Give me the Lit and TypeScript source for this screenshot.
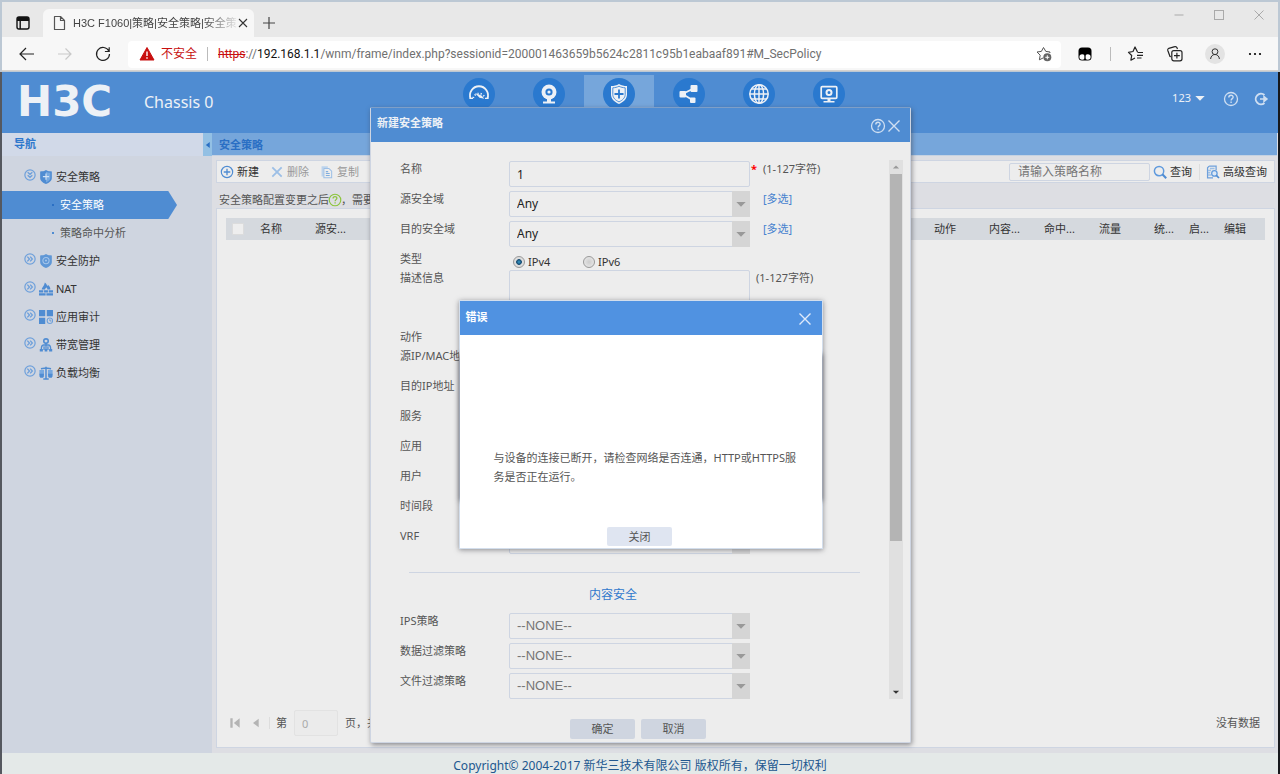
import { LitElement, html, css, svg } from "lit";
import { customElement, property, state } from "lit/decorators.js";
import { classMap } from "lit/directives/class-map.js";

const glyphs = {
  workspace: svg`<rect x="3" y="3" width="12" height="12" rx="2" fill="none" stroke="#111" stroke-width="1.4"/><path d="M3 6V5a2 2 0 0 1 2-2h8a2 2 0 0 1 2 2v2H3z" fill="#111"/><path d="M6.2 6v9" stroke="#111" stroke-width="1.4"/>`,
  page: svg`<path d="M4.5 2.5h6l4 4v9h-10zM10.5 2.5v4h4" fill="none" stroke="#555" stroke-width="1.2" stroke-linejoin="round"/>`,
  close: svg`<path d="M3 3l12 12M15 3L3 15" stroke="#333" stroke-width="1.600" fill="none"/>`,
  plus: svg`<path d="M3 9h12M9 3v12" stroke="#444" stroke-width="1.2" fill="none"/>`,
  min: svg`<path d="M4.500 9h9" stroke="#aaa" fill="none"/>`,
  max: svg`<rect x="4.500" y="4.500" width="9" height="9" stroke="#aaa" fill="none"/>`,
  exit: svg`<path d="M4.500 4.500l9 9M13.500 4.500l-9 9" stroke="#aaa" fill="none"/>`,
  back: svg`<path d="M2 9h14M8 3L2 9l6 6" stroke="#222" stroke-width="1.2" fill="none"/>`,
  forward: svg`<path d="M2 9h13M9.500 3.500L15 9l-5.500 5.500" stroke="#c9c9c9" stroke-width="1.2" fill="none"/>`,
  reload: svg`<path d="M14.800 6A6.500 6.500 0 1 0 15.500 9M15.200 2.200v4.300h-4.300" stroke="#222" stroke-width="1.2" fill="none"/>`,
  warn: svg`<path d="M9 2.500L16 15H2z" fill="#c80f0f" stroke="#c80f0f" stroke-linejoin="round"/><path d="M9 6.500v4.500M9 12.300v1.400" stroke="#fff" stroke-width="1.4"/>`,
  addStar: svg`<path d="M14.800 8L15 7l-4.200-.6L8.500 2.500 6.400 6.400 2 7l3.200 3.200-.8 4.600L8 13" fill="none" stroke="#555" stroke-linejoin="round"/><circle cx="12.300" cy="12.300" r="4" fill="#666"/><path d="M10.300 12.300h4M12.300 10.300v4" stroke="#fff"/>`,
  ext: svg`<rect x="2.500" y="2.500" width="13" height="13" rx="3.500" fill="#000"/><circle cx="6.200" cy="12" r="2.800" fill="#fff"/><circle cx="11.800" cy="12" r="2.800" fill="#fff"/><path d="M9 9.500v5" stroke="#000" stroke-width="1.2"/>`,
  favs: svg`<path d="M10.500 7L8 2 6 6.500l-4.500.8 3.200 3.200-.8 4.700L8 13" fill="none" stroke="#222" stroke-width="1.2" stroke-linejoin="round"/><path d="M10.500 7.500h5.500M10 10.300h6M10 13h4.500" stroke="#222" stroke-width="1.2"/>`,
  coll: svg`<path d="M5 11.800l-1-.3L1.800 5.500a1.800 1.800 0 0 1 1-2.200l6-1.600a1.800 1.800 0 0 1 2.200 1l.4 1.400" fill="none" stroke="#222" stroke-width="1.2"/><rect x="5.800" y="5.600" width="10.200" height="10.200" rx="2" fill="none" stroke="#222" stroke-width="1.200"/><path d="M8 10.700h5.800M10.900 7.800v5.800" stroke="#222" stroke-width="1.200"/>`,
  user: svg`<circle cx="10" cy="10" r="10" fill="#e3e3e3"/><circle cx="10" cy="7.700" r="2.900" fill="none" stroke="#333"/><path d="M5.600 15c.4-6 8.400-6 8.800 0" fill="none" stroke="#333"/>`,
  dots: svg`<circle cx="4" cy="9" r="1.100"/><circle cx="9" cy="9" r="1.100"/><circle cx="14" cy="9" r="1.100"/>`,
  gauge: svg`<path d="M7.600 20.500a9 9 0 1 1 16.800 0" fill="none" stroke="#edf1f6" stroke-width="1.800"/><path d="M10.200 20a6 6 0 0 1 11.600 0" fill="none" stroke="#edf1f6" stroke-width="1.800" stroke-dasharray="1.200 1.900"/><path d="M12 15l6.500 2.500 2.800 3.300-4.800-1z" fill="#edf1f6"/><path d="M6.500 20.300h3.500M22 20.300h3.500" stroke="#edf1f6" stroke-width="1.300"/>`,
  cam: svg`<circle cx="16" cy="14" r="7.500" fill="#edf1f6"/><circle cx="16" cy="14" r="3.600" fill="#2a79cf"/><circle cx="16" cy="14" r="1.600" fill="#edf1f6"/><path d="M14 21h4v2.500h4v2H10v-2h4z" fill="#edf1f6"/>`,
  shield: svg`<path d="M16 6c2.500 1.600 5 2 8 2v8.500c0 4.500-3.500 7.500-8 9.500-4.500-2-8-5-8-9.500V8c3 0 5.500-.4 8-2z" fill="#edf1f6"/><path d="M16 8.200c2 1.100 4 1.500 6.200 1.600v6.600c0 3.400-2.600 5.800-6.200 7.500-3.600-1.700-6.200-4.100-6.200-7.500V9.800c2.200-.1 4.200-.5 6.200-1.600z" fill="none" stroke="#2a79cf" stroke-width=".8"/><path d="M16 11.500v9M11.500 16h9" stroke="#2a79cf" stroke-width="1.800"/>`,
  nodes: svg`<path d="M9.500 16l11-5.500M9.500 16l10 6" stroke="#edf1f6" stroke-width="1.800"/><rect x="6.500" y="13" width="6.500" height="6.500" rx="1" fill="#edf1f6"/><rect x="17.500" y="7" width="7" height="7" rx="1" fill="#edf1f6"/><rect x="17" y="19.500" width="5.500" height="5.500" rx="1" fill="#edf1f6"/>`,
  globe: svg`<g fill="none" stroke="#edf1f6" stroke-width="1.500"><circle cx="16" cy="16" r="9.200"/><ellipse cx="16" cy="16" rx="4.600" ry="9.200"/><path d="M16 6.800v18.400M6.800 16h18.400M8.500 11h15M8.500 21h15"/></g>`,
  screen: svg`<rect x="8.200" y="8.700" width="15.600" height="11.600" rx="1" fill="none" stroke="#edf1f6" stroke-width="1.700"/><circle cx="16" cy="14.400" r="2.500" fill="none" stroke="#edf1f6" stroke-width="2"/><path d="M14.500 21h3v2h4v1.600h-11V23h4z" fill="#edf1f6"/>`,
  help: svg`<circle cx="9" cy="9" r="6.500" fill="none" stroke="currentColor" stroke-width="1.300"/><path d="M6.800 7.400c0-3 4.500-2.800 4.300-.2-.1 1.400-2 1.500-2 3.300M9.100 11.500v1.500" fill="none" stroke="currentColor" stroke-width="1.400"/>`,
  logout: svg`<path d="M12.500 5A5.300 5.300 0 1 0 12.500 13" fill="none" stroke="currentColor" stroke-width="1.900"/><path d="M8 9h6M12 6.500L15 9l-3 2.500z" stroke="currentColor" stroke-width="1.500" fill="currentColor"/>`,
  cross: svg`<path d="M3.500 3.500l11 11M14.500 3.500l-11 11" stroke="currentColor" stroke-width="1.400" fill="none"/>`,
  open: svg`<circle cx="9" cy="9" r="7.700" fill="none" stroke="#6ea0db" stroke-width="1.800"/><path d="M5.500 5L9 8l3.500-3M5.500 9.200L9 12.400l3.500-3.200" fill="none" stroke="#6ea0db" stroke-width="2"/>`,
  shut: svg`<circle cx="9" cy="9" r="7.700" fill="none" stroke="#6ea0db" stroke-width="1.800"/><path d="M5 5.500L8.200 9 5 12.500M9.300 5.500L12.500 9l-3.200 3.500" fill="none" stroke="#6ea0db" stroke-width="2"/>`,
  sPlus: svg`<path d="M9 0c2.200 1.500 4.800 1.800 7.500 1.800v8.400c0 3.800-3.200 5.900-7.500 7.800-4.300-1.900-7.500-4-7.500-7.800V1.800C4.200 1.800 6.800 1.500 9 0z" fill="#4f8cd2"/><path d="M9 2.200c1.600.9 3.500 1.300 5.500 1.400v6.600c0 2.600-2.200 4.100-5.500 5.800z" fill="#77a9e0"/><path d="M9 4.500v8M5 8.500h8" stroke="#d3e3f5" stroke-width="1.500"/>`,
  sGear: svg`<path d="M9 0c2.200 1.500 4.800 1.800 7.500 1.800v8.400c0 3.800-3.200 5.900-7.500 7.800-4.300-1.900-7.500-4-7.500-7.800V1.800C4.200 1.800 6.800 1.500 9 0z" fill="#5f97d6"/><circle cx="9" cy="8.500" r="4" fill="none" stroke="#a5c5ea" stroke-width="1.400"/><circle cx="9" cy="8.500" r="1.300" fill="#a5c5ea"/>`,
  wall: svg`<path d="M0 10.500h5.500v3H0zM6.500 10.500h5v3h-5zM12.500 10.500H18v3h-5.500zM0 14.500h8.500v3H0zM9.500 14.500H18v3H9.500z" fill="#4f8cd2"/><path d="M3.500 9.800c0-3 3-4.300 4-9.300C10 2 10 4.500 11 5c.4-.5.500-1 .4-1.600C14 5.500 15 8 14.500 9.800h-3.800c.3-1.500-.7-2-1.200-3-.3 1.300-1.800 1.500-1.700 3z" fill="#4f8cd2"/>`,
  grid: svg`<path d="M0 0h8v8H0zM10 0h8v8h-8zM0 10h8v8H0z" fill="#4f8cd2"/><circle cx="14" cy="13.800" r="3.500" fill="#cfd5e0" stroke="#6ea0db" stroke-width="1.400"/><path d="M14 11.800v2.300h2" stroke="#4f8cd2" fill="none"/>`,
  band: svg`<circle cx="9" cy="4" r="2.900" fill="none" stroke="#4f8cd2" stroke-width="2"/><path d="M9 6.700V14M9 9H6c-2.500 0-3 2-3 5.500M9 9h3c2.500 0 3 2 3 5.500M6.500 10.500v5M11.500 10.500v5" fill="none" stroke="#4f8cd2" stroke-width="1.700"/><path d="M1 14h4v3.500H1zM7.300 14h3.400v3.500H7.300zM13 14h4v3.500h-4z" fill="#4f8cd2"/>`,
  scale: svg`<path d="M9 1v15M5.500 16.700h7M2.500 3.500l6.500-1 6.500 1" stroke="#4f8cd2" stroke-width="1.900" fill="none"/><path d="M.5 5h6v9h-6zM11.500 5h6v9h-6z" fill="#77a9e0"/><path d="M.5 10h6l-1 5h-4zM11.500 10h6l-1 5h-4z" fill="#4f8cd2"/>`,
  add: svg`<circle cx="9" cy="9" r="7.300" fill="none" stroke="#4f8cd2" stroke-width="1.500"/><path d="M4.800 9h8.400M9 4.800v8.400" stroke="#4f8cd2" stroke-width="1.700"/>`,
  del: svg`<path d="M3 3l12 12M15 3L3 15" stroke="#9cbfe6" stroke-width="2.300"/>`,
  copy: svg`<path d="M2 1.500h8v2.300H4.500v11H2z" fill="#bcd3ec"/><path d="M5 4.500h6.500L15 8v8.500H5z" fill="none" stroke="#9cbfe6" stroke-width="1.300"/><path d="M7.500 8.500h3M7.500 11h5M7.500 13.500h5" stroke="#7fadde" stroke-width="1.400"/>`,
  search: svg`<circle cx="7.800" cy="7.800" r="6" fill="none" stroke="#5f9add" stroke-width="1.900"/><path d="M12 12l5 5" stroke="#4f8cd2" stroke-width="2.600"/>`,
  adv: svg`<path d="M4 1.500h9v5M4 1.500L2 3.500v13h7" fill="none" stroke="#6ea0db" stroke-width="1.600"/><path d="M5 4.500h6M2.500 7h4M2.500 10h3M2.500 13h4" stroke="#9cbfe6" stroke-width="1.900"/><circle cx="10.800" cy="10.800" r="3.500" fill="#dce8f6" stroke="#5f9add" stroke-width="1.600"/><path d="M13.300 13.300l3.400 3.400" stroke="#4f8cd2" stroke-width="2.200"/>`,
  first: svg`<path d="M3 3h3v12H3zM15 3v12L7.500 9z" fill="#b4b4b4"/>`,
  prev: svg`<path d="M13 2.500v13L4.500 9z" fill="#b4b4b4"/>`,
  down: svg`<path d="M2 6h14L9 13z" fill="currentColor"/>`,
  up: svg`<path d="M2 12.500h14L9 5.500z" fill="currentColor"/>`,
  left: svg`<path d="M13 2v14L4 9z" fill="currentColor"/>`,
};

type Glyph = keyof typeof glyphs;
const icon = (name: Glyph, size = "m", box = 18) =>
  html`<svg class="ico ${size}" viewBox="0 0 ${box} ${box}" aria-hidden="true">${glyphs[name]}</svg>`;

const base = css`
  :host, * { box-sizing: border-box; }
  :host {
    font-family: "Noto Sans", "Noto Sans CJK SC", sans-serif;
    font-size: 11px;
    line-height: 16px;
    color: #555;
  }
  button, input, select, textarea { font: inherit; color: inherit; margin: 0; outline: none; }
  button { background: none; border: 0; padding: 0; display: flex; align-items: center; justify-content: center; }
  a { color: inherit; text-decoration: none; }
  .ico { display: block; flex: none; width: 14px; height: 14px; }
  .xs { width: 8px; height: 8px; }
  .s { width: 12px; height: 12px; }
  .n { width: 16px; height: 16px; }
  .l { width: 18px; height: 18px; }
  .av { width: 20px; height: 20px; }
  .xl { width: 32px; height: 32px; }
`;

@customElement("browser-chrome")
class BrowserChrome extends LitElement {
  static styles = [base, css`
    :host { display: block; }
    .tabs { display: flex; height: 35px; padding-left: 12px; background: #e8e8e8; align-items: flex-end; }
    .tabs > button { height: 28px; width: 18px; }
    .tab { display: flex; align-items: center; width: 211px; height: 28px; margin: 0 6px 0 11px; padding: 0 7px; background: #f7f7f7; border-radius: 6px 6px 0 0; }
    .title { flex: 1; margin-left: 5px; font-family: "Liberation Sans", "Noto Sans CJK SC", sans-serif; white-space: nowrap; color: #444; -webkit-mask-image: linear-gradient(90deg, #000 80%, rgba(0, 0, 0, .1)); }
    .win { margin-left: auto; display: flex; gap: 22px; align-self: flex-start; padding: 4px 10px 0 0; }
    .bar { display: flex; align-items: center; height: 34px; padding: 1px 14px 0 16px; background: #f7f7f7; border-bottom: 1px solid #d6d2ce; }
    .nav { display: flex; gap: 20px; width: 110px; }
    .url { flex: 1; display: flex; align-items: center; height: 27px; padding: 0 8px 0 10px; background: #fff; border-radius: 4px; font: 12px/18px Roboto, "Noto Sans CJK SC", sans-serif; color: #707070; overflow: hidden; white-space: nowrap; }
    .unsafe { color: #c80f0f; margin: 0 10px 0 5px; }
    .sep { width: 1px; height: 14px; background: #bbb; }
    .path { flex: 1; margin-left: 10px; }
    .path s { color: #c80f0f; }
    .path b { font-weight: 400; color: #111; }
    .tools { display: flex; align-items: center; gap: 21px; margin-left: 15px; }
    .tools .sep { margin: 0 -5px; }
  `];
  render() {
    return html`
      <div class="tabs">
        <button aria-label="工作区">${icon("workspace", "l")}</button>
        <div class="tab">${icon("page", "l")}<span class="title">H3C F1060|策略|安全策略|安全策</span>
          <button aria-label="关闭标签页">${icon("close", "s")}</button></div>
        <button aria-label="新标签页">${icon("plus", "l")}</button>
        <div class="win">
          <button aria-label="最小化">${icon("min", "l")}</button>
          <button aria-label="最大化">${icon("max", "l")}</button>
          <button aria-label="关闭窗口">${icon("exit", "l")}</button>
        </div>
      </div>
      <div class="bar">
        <div class="nav">
          <button aria-label="后退">${icon("back", "l")}</button>
          <button aria-label="前进">${icon("forward", "l")}</button>
          <button aria-label="刷新">${icon("reload", "l")}</button>
        </div>
        <div class="url">${icon("warn", "l")}<span class="unsafe">不安全</span><span class="sep"></span>
          <span class="path"><s>https</s>://<b>192.168.1.1</b>/wnm/frame/index.php?sessionid=200001463659b5624c2811c95b1eabaaf891#M_SecPolicy</span>
          <button aria-label="添加到收藏夹">${icon("addStar", "l")}</button>
        </div>
        <div class="tools">
          <button aria-label="扩展">${icon("ext", "l")}</button><span class="sep"></span>
          <button aria-label="收藏夹">${icon("favs", "l")}</button>
          <button aria-label="集锦">${icon("coll", "l")}</button>
          <button aria-label="个人资料">${icon("user", "av", 20)}</button>
          <button aria-label="更多">${icon("dots", "l")}</button>
        </div>
      </div>`;
  }
}

@customElement("device-header")
class DeviceHeader extends LitElement {
  static styles = [base, css`
    :host { display: flex; height: 62px; background: #4f8cd2; color: #edf1f6; }
    .brand { flex: 0 0 442px; display: flex; align-items: center; gap: 20px; padding-left: 15px; }
    .logo { width: 107px; font: bold 42px/62px "DejaVu Sans", sans-serif; }
    .name { font: 16px/62px "Noto Sans", sans-serif; }
    nav { display: flex; padding-top: 4px; }
    nav a { width: 70px; display: flex; justify-content: center; align-items: flex-start; padding-top: 3px; }
    nav a.on { background: #76a6db; }
    .disc { background: #2a79cf; border-radius: 50%; }
    .user { margin-left: auto; display: flex; align-items: center; padding: 0 8px 8px 0; }
    .user button { gap: 3px; }
    .who { margin-right: 16px; }
    .help { margin-right: 12px; padding-top: 2px; }
    .out { padding-top: 2px; }
    .help, .out { color: #cfdff2; }
  `];
  render() {
    const tabs: [Glyph, string][] = [["gauge", "概览"], ["cam", "监控"], ["shield", "策略"], ["nodes", "对象"], ["globe", "网络"], ["screen", "系统"]];
    return html`
      <div class="brand"><span class="logo">H3C</span><span class="name">Chassis 0</span></div>
      <nav>${tabs.map(([g, t]) => html`<a href="#" aria-label=${t} class=${classMap({ on: g === "shield" })}><span class="disc">${icon(g, "xl", 32)}</span></a>`)}</nav>
      <div class="user">
        <button class="who">123 ${icon("down", "s")}</button>
        <button class="help" aria-label="帮助">${icon("help", "l")}</button>
        <button class="out" aria-label="退出">${icon("logout", "l")}</button>
      </div>`;
  }
}

@customElement("side-nav")
class SideNav extends LitElement {
  static styles = [base, css`
    :host { display: block; background: #cfd5e0; color: #333; }
    .head { display: flex; justify-content: space-between; height: 23px; background: #d1d9e8; color: #2f78cc; font-weight: 700; padding-left: 12px; line-height: 22px; }
    .head button { width: 9px; background: #93c0e4; color: #2a6fc4; }
    ul { list-style: none; margin: 0; padding: 7px 0 0; }
    li { display: flex; align-items: center; height: 28px; padding-left: 22px; }
    li a { display: flex; align-items: center; gap: 3px; }
    li a .ico:first-child { margin-bottom: 4px; }
    .sub { padding-left: 50px; color: #555; }
    .sub a { gap: 6px; }
    .dot { width: 2px; height: 2px; background: #4f8cd2; }
    .on { width: 175px; background: #4f8cd2; color: #fff; clip-path: polygon(0 0, 95% 0, 100% 50%, 95% 100%, 0 100%); }
    .on .dot { background: #2a6fc4; }
  `];
  render() {
    const rest: [Glyph, string][] = [["sGear", "安全防护"], ["wall", "NAT"], ["grid", "应用审计"], ["band", "带宽管理"], ["scale", "负载均衡"]];
    return html`
      <div class="head"><span>导航</span><button aria-label="收起导航">${icon("left", "xs")}</button></div>
      <ul>
        <li><a href="#">${icon("open", "s")}${icon("sPlus")}安全策略</a></li>
        <li class="sub on"><a href="#"><span class="dot"></span>安全策略</a></li>
        <li class="sub"><a href="#"><span class="dot"></span>策略命中分析</a></li>
        ${rest.map(([g, t]) => html`<li><a href="#">${icon("shut", "s")}${icon(g)}${t}</a></li>`)}
      </ul>`;
  }
}

@customElement("policy-list")
class PolicyList extends LitElement {
  static styles = [base, css`
    :host { display: flex; flex-direction: column; background: #dddee3; min-width: 0; }
    .crumb { height: 23px; padding-left: 7px; background: #76a6db; color: #2a6fc4; font-weight: 700; line-height: 24px; border-bottom: 1px solid #c5d2e2; }
    .body { flex: 1; display: flex; flex-direction: column; padding: 4px 2px 5px 4px; }
    .tools { display: flex; align-items: center; height: 23px; background: #ededed; border: 1px solid #ced5e2; padding: 0 7px 0 3px; color: #333; white-space: nowrap; }
    .tools button { gap: 3px; margin-right: 11px; }
    .tools button.off { color: #999; }
    .tools input { margin-left: auto; margin-right: 3px; width: 141px; height: 18px; padding: 0 8px; border: 1px solid #ced5e2; border-radius: 2px; background: #ededed; font-size: 12px; }
    .tools input::placeholder { color: #757575; opacity: 1; }
    .tools .find { margin-right: 7px; }
    .tools .adv { margin-right: 0; padding-left: 6px; border-left: 1px solid #ddd; }
    .note { display: flex; align-items: center; height: 25px; padding: 8px 3px 0; }
    .note .ico { color: #8cc43c; margin: 0 -2px; }
    .panel { flex: 1; display: flex; flex-direction: column; justify-content: space-between; background: #ededed; border: 1px solid #ced5e2; padding: 9px 9px 11px; }
    table { width: 100%; table-layout: fixed; border-collapse: collapse; background: #d5d9de; color: #333; }
    th { height: 22px; padding: 0 0 0 6px; text-align: left; font-weight: 400; white-space: nowrap; }
    th input { display: block; appearance: none; width: 12px; height: 12px; border: 1px solid #dcdcdc; background: #eee; border-radius: 1px; }
    .c1 { width: 28px; } .c2 { width: 55px; } .c3 { width: 35px; } .c4 { width: 47px; }
    .foot { display: flex; align-items: center; }
    .foot button { margin-right: 8px; }
    .foot .bar { width: 1px; height: 12px; background: #ddd; margin: 0 6px 0 -1px; }
    .foot label { display: flex; align-items: center; gap: 7px; }
    .foot input { width: 44px; height: 26px; padding: 0 7px; border: 1px solid #e2e2e2; background: #ebebeb; border-radius: 2px; color: #aaa; }
    .foot .none { margin-left: auto; margin-right: 5px; }
    .foot .first { margin-left: 2px; }
  `];
  render() {
    return html`
      <div class="crumb">安全策略</div>
      <div class="body">
        <div class="tools">
          <button>${icon("add")}新建</button>
          <button class="off">${icon("del")}删除</button>
          <button class="off">${icon("copy")}复制</button>
          <input aria-label="策略名称" placeholder="请输入策略名称" />
          <button class="find">${icon("search")}查询</button>
          <button class="adv">${icon("adv")}高级查询</button>
        </div>
        <div class="note">安全策略配置变更之后${icon("help", "n")}，需要</div>
        <div class="panel">
          <table><thead><tr>
            <th class="c1"><input type="checkbox" aria-label="全选" /></th>
            <th class="c2">名称</th><th class="c2">源安...</th><th></th>
            <th class="c2">动作</th><th class="c2">内容...</th><th class="c2">命中...</th><th class="c2">流量</th>
            <th class="c3">统...</th><th class="c3">启...</th><th class="c4">编辑</th>
          </tr></thead></table>
          <div class="foot">
            <button class="first" aria-label="首页">${icon("first")}</button>
            <button aria-label="上一页">${icon("prev", "s")}</button>
            <span class="bar"></span>
            <label>第<input value="0" />页，共</label>
            <span class="none">没有数据</span>
          </div>
        </div>
      </div>`;
  }
}

@customElement("policy-dialog")
class PolicyDialog extends LitElement {
  @property({ type: String }) policyName = "1";
  @state() private ipType = "IPv4";
  static styles = [base, css`
    :host { display: block; background: #ededed; border: 1px solid #ced5e2; border-top-color: #7e9fc8; border-radius: 2px; box-shadow: 1px 2px 5px rgba(60, 60, 70, .55); }
    header { display: flex; align-items: center; height: 34px; padding: 3px 7px 3px 6px; background: #4f8cd2; color: #edf1f6; }
    h2 { flex: 1; margin: 0 0 4px; font-size: 11px; line-height: 16px; }
    header button { color: #cfdff2; padding-top: 2px; }
    header button:last-child { margin-left: -2px; }
    .scroll { display: flex; margin: 18px 7px 0 29px; }
    form { flex: 1; padding-top: 1px; }
    .row { display: grid; grid-template-columns: 109px 241px 1fr; align-items: start; height: 26px; margin-bottom: 4px; white-space: nowrap; }
    .row input.text, select, textarea { width: 100%; height: 26px; padding: 0 7px; border: 1px solid #ced5e2; border-radius: 2px; background: #ededed; color: #222; font: 12px/24px "Noto Sans", sans-serif; appearance: none; display: block; }
    textarea { height: 56px; resize: none; }
    .pick { display: grid; grid-template-columns: 1fr; }
    .pick > * { grid-area: 1 / 1; }
    .pick span { justify-self: end; width: 18px; height: 26px; background: #d5d5d5; display: flex; align-items: center; justify-content: center; color: #999; pointer-events: none; }
    .none select { color: #757575; font-family: "Liberation Sans", sans-serif; font-size: 13px; }
    .row .hint { padding-left: 6px; }
    .row .req { padding-left: 1px; }
    .req b { display: inline-block; width: 12px; color: #f00; }
    .row a { padding-left: 13px; color: #4682cf; }
    .row.short { height: 19px; margin: 0; }
    .row.desc { height: 59px; margin: 0; }
    .row:last-child { margin-bottom: 0; }
    .radios { display: flex; padding: 3px 0 0 4px; color: #333; }
    .radios label { display: flex; align-items: center; gap: 3px; width: 70px; }
    .radios input { appearance: none; width: 12px; height: 12px; border: 1px solid #999; border-radius: 50%; background: radial-gradient(#ccc, #eee); }
    .radios input:checked { background: radial-gradient(circle, #3aa0d0 0, #14486e 35%, #ddd 45%); }
    h3 { margin: 18px 29px 10px 9px; padding: 14px 43px 0 0; border-top: 1px solid #ced5e2; text-align: center; font-size: 12px; line-height: 16px; font-weight: 400; color: #2f78cc; }
    .track { width: 14px; background: #e0e0e0; display: flex; flex-direction: column; align-items: center; color: #999; }
    .track .end { height: 14px; display: flex; align-items: center; }
    .thumb { width: 12px; flex: 0 0 68%; background: #b4b4b4; }
    .track .end:last-child { margin-top: auto; color: #333; }
    footer { display: flex; justify-content: center; gap: 6px; padding: 20px 5px 3px 0; }
    footer button { width: 65px; height: 20px; border-radius: 2px; background: #cfd5e0; }
  `];
  private pick(id: string, label: string, value = "", extra: unknown = "") {
    return html`<div class="row ${value === "--NONE--" ? "none" : ""}"><label for=${id}>${label}</label>
      <div class="pick"><select id=${id}>${value ? html`<option>${value}</option>` : ""}</select><span>${icon("down", "s")}</span></div>${extra}</div>`;
  }
  private radio(t: string) {
    return html`<label><input type="radio" name="ip" .checked=${this.ipType === t} @change=${() => (this.ipType = t)} />${t}</label>`;
  }
  render() {
    const multi = html`<a href="#">[多选]</a>`;
    return html`
      <header><h2>新建安全策略</h2><button aria-label="帮助">${icon("help", "l")}</button><button aria-label="关闭">${icon("cross", "l")}</button></header>
      <div class="scroll">
        <form>
          <div class="row"><label for="name">名称</label><input class="text" id="name" .value=${this.policyName} /><span class="hint req"><b>*</b>(1-127字符)</span></div>
          ${this.pick("src", "源安全域", "Any", multi)}
          ${this.pick("dst", "目的安全域", "Any", multi)}
          <div class="row short"><span>类型</span><div class="radios">${this.radio("IPv4")}${this.radio("IPv6")}</div></div>
          <div class="row desc"><label for="desc">描述信息</label><textarea id="desc"></textarea><span class="hint">(1-127字符)</span></div>
          <div class="row short"><span>动作</span></div>
          ${this.pick("sip", "源IP/MAC地址")}
          ${this.pick("dip", "目的IP地址")}
          ${this.pick("svc", "服务")}
          ${this.pick("app", "应用")}
          ${this.pick("usr", "用户")}
          ${this.pick("time", "时间段")}
          ${this.pick("vrf", "VRF")}
          <h3>内容安全</h3>
          ${this.pick("ips", "IPS策略", "--NONE--")}
          ${this.pick("data", "数据过滤策略", "--NONE--")}
          ${this.pick("file", "文件过滤策略", "--NONE--")}
        </form>
        <div class="track"><span class="end">${icon("up", "xs")}</span><span class="thumb"></span><span class="end">${icon("down", "xs")}</span></div>
      </div>
      <footer><button>确定</button><button>取消</button></footer>`;
  }
}

@customElement("error-dialog")
class ErrorDialog extends LitElement {
  static styles = [base, css`
    :host { display: block; background: #fff; border: 1px solid #d3deec; box-shadow: 0 1px 5px rgba(60, 60, 70, .55); }
    :host::before { content: ""; position: absolute; z-index: -1; inset: 52px 0 48px; box-shadow: 0 1px 5px rgba(60, 60, 70, .8); }
    header { display: flex; align-items: center; height: 34px; padding: 0 8px 0 6px; background: #5092e1; color: #fff; }
    h2 { flex: 1; margin: 0 0 2px; font-size: 11px; line-height: 16px; }
    header button { color: #dfeafa; padding-top: 2px; }
    p { margin: 0; padding: 113px 24px 41px 34px; line-height: 19px; background: #fff; }
    footer { display: flex; justify-content: center; padding: 0 2px 2px 0; background: #fff; }
    footer button { width: 65px; height: 19px; border-radius: 2px; background: #dfe5f1; }
  `];
  render() {
    return html`
      <header><h2>错误</h2><button aria-label="关闭">${icon("cross", "l")}</button></header>
      <p>与设备的连接已断开，请检查网络是否连通，HTTP或HTTPS服务是否正在运行。</p>
      <footer><button>关闭</button></footer>`;
  }
}

@customElement("app-root")
class AppRoot extends LitElement {
  static styles = [base, css`
    :host { display: flex; flex-direction: column; position: relative; min-height: 100vh; padding: 2px 2px 0; overflow: hidden; background: linear-gradient(90deg, #55585f 0 50%, #16181c 50%); }
    .edge { position: absolute; inset: 0 0 auto; height: 72px; background: #bcc8d4; }
    browser-chrome { position: relative; }
    .main { flex: 1; display: grid; grid-template-columns: 210px 1fr; border-right: 1px solid #dddee3; }
    .copy { height: 21px; padding-top: 4px; text-align: center; font-size: 12px; line-height: 17px; background: #e4e9e8; color: #21578f; }
    .float { position: absolute; inset: 107px 0 auto; display: flex; justify-content: center; padding-left: 1px; }
    .float.top { inset: 300px 0 auto; z-index: 2; }
    policy-dialog { width: 541px; }
    error-dialog { width: 364px; position: relative; z-index: 0; }
  `];
  render() {
    return html`
      <div class="edge"></div>
      <browser-chrome></browser-chrome>
      <device-header></device-header>
      <div class="main"><side-nav></side-nav><policy-list></policy-list></div>
      <div class="copy">Copyright© 2004-2017 新华三技术有限公司 版权所有，保留一切权利</div>
      <div class="float"><policy-dialog></policy-dialog></div>
      <div class="float top"><error-dialog></error-dialog></div>`;
  }
}
